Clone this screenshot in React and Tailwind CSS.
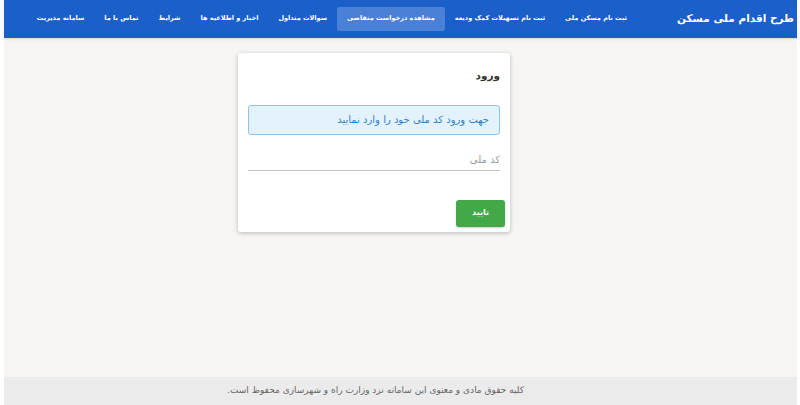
export default function App() {
  const links = [
    "ثبت نام مسکن ملی",
    "ثبت نام تسهیلات کمک ودیعه",
    "مشاهده درخواست متقاضی",
    "سوالات متداول",
    "اخبار و اطلاعیه ها",
    "شرایط",
    "تماس با ما",
    "سامانه مدیریت",
  ];

  return (
    <div className="w-[800px] h-[405px] bg-white pl-[4px] pr-[3px]" style={{ fontFamily: '"DejaVu Sans", sans-serif' }}>
      <div dir="rtl" className="h-full flex flex-col bg-[#f6f5f3]">
        {/* Navbar */}
        <nav className="h-[38px] bg-[#1b5fc9] flex items-center pr-[3px] shadow-sm">
          <div className="text-white text-[10.5px] font-bold ml-[40px] whitespace-nowrap">طرح اقدام ملی مسکن</div>
          <div className="flex items-center">
            {links.map((l, i) => (
              <div
                key={i}
                className={
                  "text-white text-[6.5px] font-bold whitespace-nowrap px-[10px] h-[24px] flex items-center rounded-[2px] " +
                  (i === 2 ? "bg-[#4a80d6]" : "")
                }
              >
                {l}
              </div>
            ))}
          </div>
        </nav>

        {/* Main */}
        <main className="flex-1 flex justify-center pt-[15px] pr-[53px]">
          <div className="w-[272px] h-[179px] bg-white rounded-[3px] shadow-[0_1px_4px_rgba(0,0,0,0.25)] px-[10px] pt-[15px]">
            <div className="text-[10.5px] text-[#333] font-bold">ورود</div>
            <div className="mt-[21px] h-[30px] bg-[#e3f2fd] border border-[#8cc4ee] rounded-[3px] flex items-center px-[10px] text-[10px] text-[#2f7fcf]">
              جهت ورود کد ملی خود را وارد نمایید
            </div>
            <div className="mt-[17px] border-b border-[#c4c4c4] pb-[3px] text-[10px] text-[#9a9a9a]">کد ملی</div>
            <div className="mt-[29px] flex justify-start">
              <button className="w-[49px] h-[27px] -mr-[5px] bg-[#43a847] rounded-[3px] text-white text-[8px] font-bold shadow-[0_1px_2px_rgba(0,0,0,0.2)]">
                تایید
              </button>
            </div>
          </div>
        </main>

        {/* Footer */}
        <footer className="h-[28px] bg-[#ebebeb] flex items-center justify-center text-[9px] text-[#666]">
          <span className="mr-[50px]">کلیه حقوق مادی و معنوی این سامانه نزد وزارت راه و شهرسازی محفوظ است.</span>
        </footer>
      </div>
    </div>
  );
}
